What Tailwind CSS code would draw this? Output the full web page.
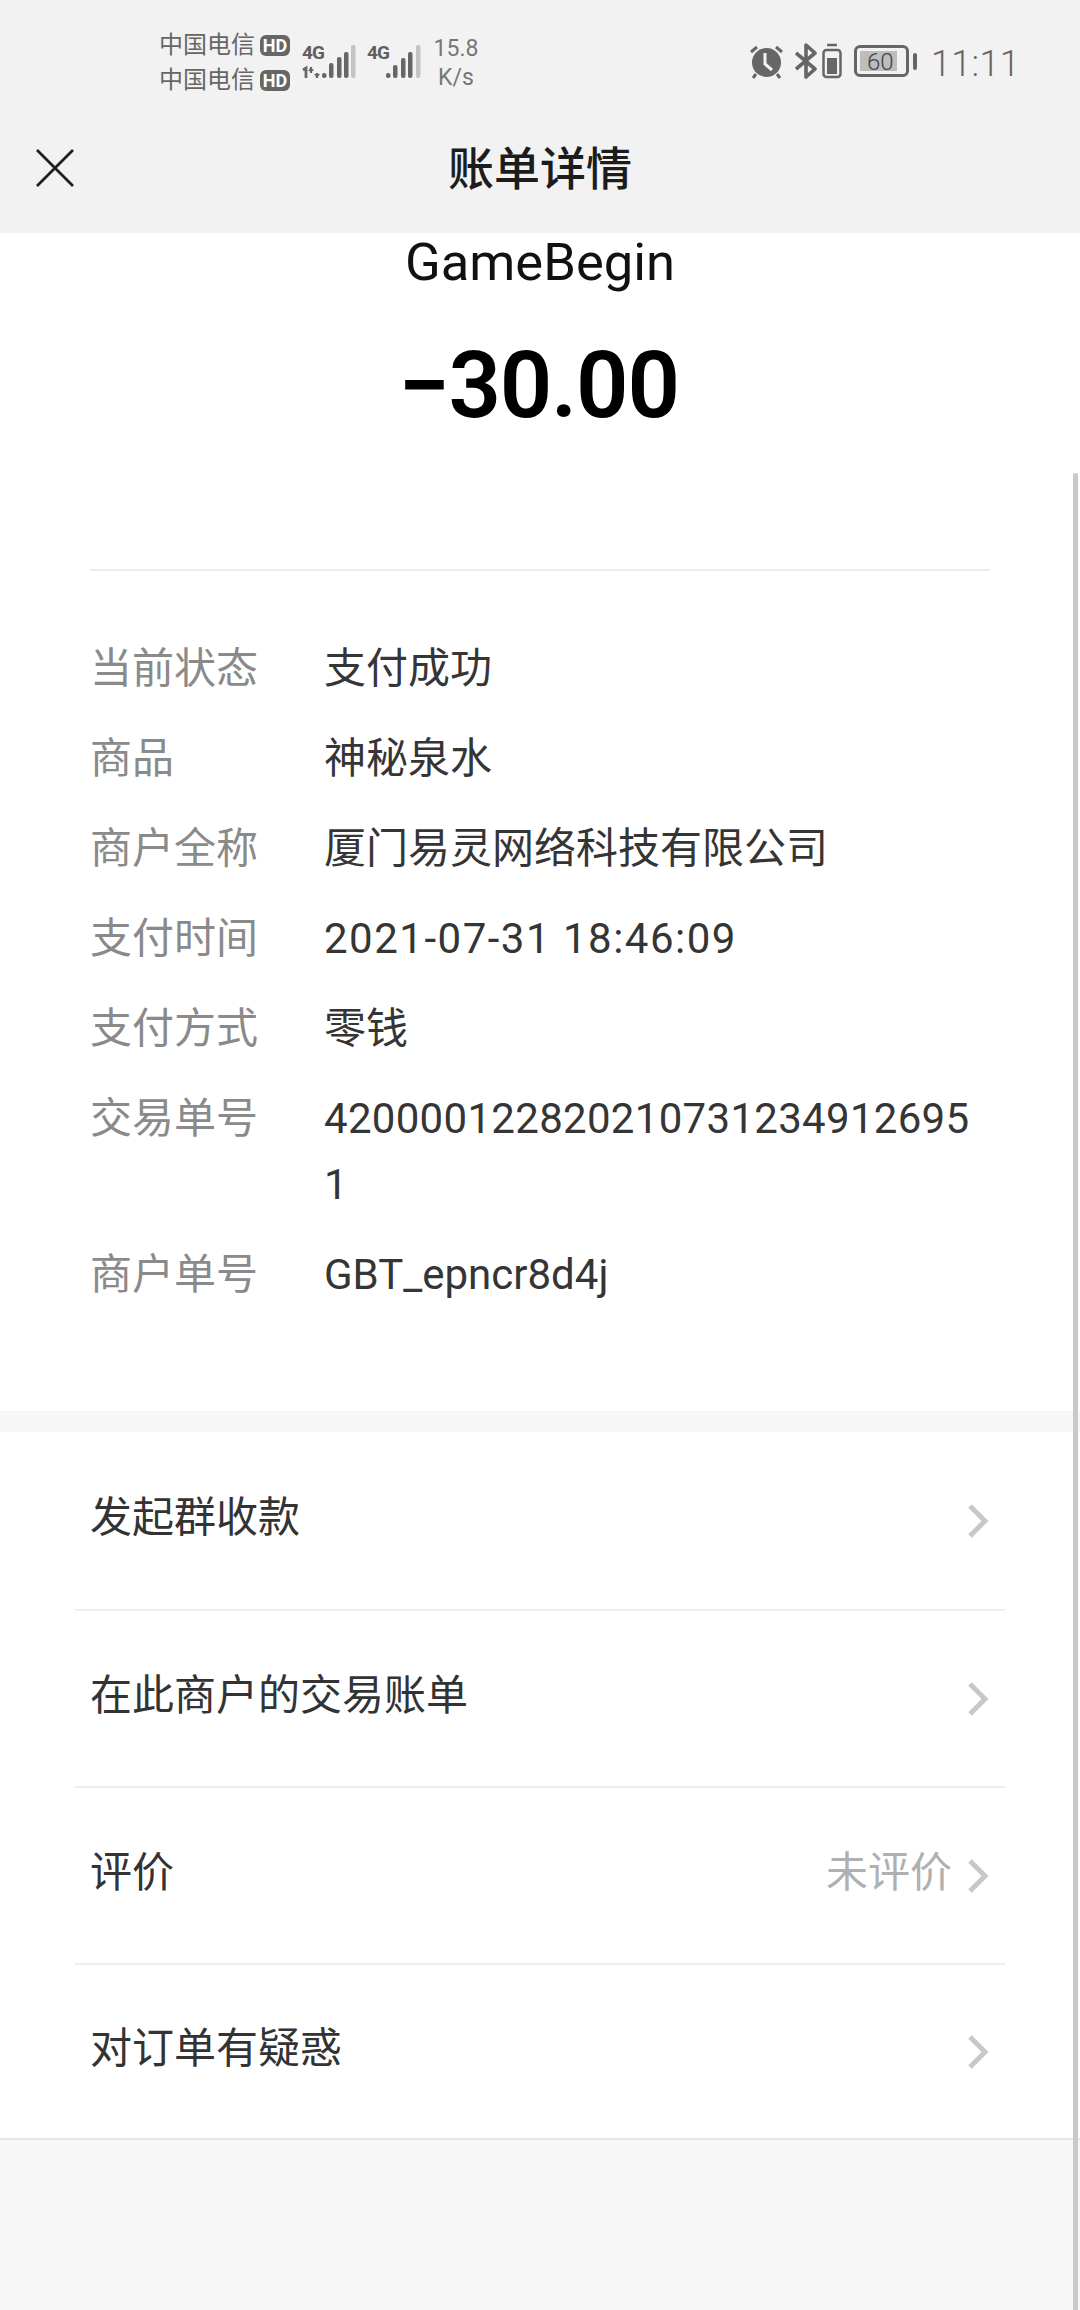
<!DOCTYPE html>
<html lang="zh">
<head>
<meta charset="utf-8">
<script src="https://cdn.jsdelivr.net/npm/@tailwindcss/browser@4"></script>
</head>
<body class="m-0">
<div class="relative w-[1080px] h-[2310px] overflow-hidden bg-[#f7f7f7] font-['Roboto','Noto_Sans_CJK_SC',sans-serif]">

  <!-- header -->
  <header class="h-[233px] bg-[#f2f2f2] flex flex-col">
    <div class="h-[130px] relative flex text-[#666666]">
      <div class="pl-[159px] pt-[32px] flex flex-col gap-[9px] w-[302px]">
        <div class="flex items-center gap-[7px] h-[26px]"><span class="text-[24px] leading-[26px] w-[94px] whitespace-nowrap">中国电信</span><span class="w-[30px] h-[21px] rounded-[6px] bg-[#666666] text-white text-[18px] leading-[21px] font-bold text-center">HD</span></div>
        <div class="flex items-center gap-[7px] h-[26px]"><span class="text-[24px] leading-[26px] w-[94px] whitespace-nowrap">中国电信</span><span class="w-[30px] h-[21px] rounded-[6px] bg-[#666666] text-white text-[18px] leading-[21px] font-bold text-center">HD</span></div>
      </div>
      <div class="w-[65px] relative">
        <span class="absolute left-0 top-[44px] text-[19px] leading-[18px] font-bold tracking-[-1px] text-[#5f5f5f]">4G</span>
        <svg class="absolute left-0 top-[44px]" width="54" height="36" viewBox="0 0 54 36" fill="none">
          <path d="M1 26l3-2v10" stroke="#666" stroke-width="2.800"/>
          <path d="M9 23v6M15 29v5" stroke="#666" stroke-width="2.200"/>
          <path d="M6 27h6l-3-4zM12 30h6l-3 4z" fill="#666"/>
          <rect x="20" y="29" width="4.500" height="5" rx="2" fill="#666"/><rect x="27" y="19" width="4.500" height="15" rx="2" fill="#666"/><rect x="35" y="13" width="4.500" height="21" rx="2" fill="#666"/><rect x="42" y="8" width="4.500" height="26" rx="2" fill="#666"/><rect x="49" y="1" width="4.500" height="33" rx="2" fill="#c4c4c4"/>
        </svg>
      </div>
      <div class="w-[65px] relative">
        <span class="absolute left-0 top-[44px] text-[19px] leading-[18px] font-bold tracking-[-1px] text-[#5f5f5f]">4G</span>
        <svg class="absolute left-[19px] top-[44px]" width="36" height="36" viewBox="0 0 36 36">
          <rect x="0" y="29" width="4.500" height="5" rx="2" fill="#666"/><rect x="7" y="21" width="4.500" height="13" rx="2" fill="#666"/><rect x="15" y="14" width="4.500" height="20" rx="2" fill="#666"/><rect x="22" y="8" width="4.500" height="26" rx="2" fill="#666"/><rect x="30" y="1" width="4.500" height="33" rx="2" fill="#c4c4c4"/>
        </svg>
      </div>
      <div class="absolute left-[430px] top-[35px] w-[52px] text-center text-[23px] leading-[28px] text-[#777777]"><div>15.8</div><div class="mt-[1px]">K/s</div></div>
      <div class="absolute left-[748px] top-[43px] flex items-start">
        <svg width="37" height="36" viewBox="0 0 37 36" fill="none">
          <circle cx="18.500" cy="19.500" r="14.500" fill="#666"/>
          <path d="M17 10v11l7 6" stroke="#f2f2f2" stroke-width="3"/>
          <path d="M3 9l6-5M34 9l-6-5M8 31l-3 4M29 31l3 4" stroke="#666" stroke-width="3"/>
        </svg>
        <svg class="ml-[10px]" width="23" height="36" viewBox="0 0 23 36" fill="none"><path d="M1 10l19 16-9 8V2l9 8L1 26" stroke="#666" stroke-width="3.600" stroke-linejoin="round"/></svg>
        <svg class="ml-[4px]" width="20" height="36" viewBox="0 0 20 36" fill="none"><path d="M5 2h10" stroke="#666" stroke-width="2.500"/><rect x="1.500" y="7" width="17" height="27" rx="3" stroke="#666" stroke-width="2.500"/><rect x="5" y="15" width="10" height="16" fill="#666"/></svg>
      </div>
      <div class="absolute left-[854px] top-[45px] w-[55px] h-[32px] rounded-[6px] border-[3px] border-[#666666] p-[3px]">
        <div class="h-full w-[37px] bg-[#bdbdbd]"></div>
        <span class="absolute left-[10px] top-[1px] text-[24px] leading-[26px] font-light text-[#444444]">60</span>
      </div>
      <div class="absolute left-[913px] top-[53px] w-[4px] h-[17px] rounded-[2px] bg-[#666666]"></div>
      <div class="absolute left-[931px] top-[42px] text-[36px] leading-[44px] font-light tracking-[0.300px] text-[#666666]">11:11</div>
    </div>
    <div class="relative flex-1 flex items-start justify-center">
      <svg class="absolute left-[36px] top-[19px]" width="38" height="38" viewBox="0 0 38 38" fill="none"><path d="M1 1l36 36M37 1L1 37" stroke="#1f1f1f" stroke-width="2.800"/></svg>
      <h1 class="mt-[9px] text-[46px] leading-[60px] font-medium text-[#1c1c1c]">账单详情</h1>
    </div>
  </header>

  <!-- summary and details -->
  <section class="bg-white h-[1178px]">
    <div class="text-center text-[52.500px] leading-[58px] text-[#111111]">GameBegin</div>
    <div class="mt-[45px] pr-[3px] text-center text-[92px] leading-[100px] font-semibold tracking-[-1.200px] text-black">−30.00</div>
    <div class="mx-[90px] mt-[133px] h-[2px] bg-[#ececec]"></div>
    <dl class="mt-[65px] mx-[90px] flex flex-col gap-[24px] text-[42px] leading-[66px]">
      <div class="flex"><dt class="w-[234px] shrink-0 text-[#8a8a8a]">当前状态</dt><dd class="text-[#353535]">支付成功</dd></div>
      <div class="flex"><dt class="w-[234px] shrink-0 text-[#8a8a8a]">商品</dt><dd class="text-[#353535]">神秘泉水</dd></div>
      <div class="flex"><dt class="w-[234px] shrink-0 text-[#8a8a8a]">商户全称</dt><dd class="text-[#353535]">厦门易灵网络科技有限公司</dd></div>
      <div class="flex"><dt class="w-[234px] shrink-0 text-[#8a8a8a]">支付时间</dt><dd class="text-[#353535] tracking-[1.500px]">2021-07-31 18:46:09</dd></div>
      <div class="flex"><dt class="w-[234px] shrink-0 text-[#8a8a8a]">支付方式</dt><dd class="text-[#353535]">零钱</dd></div>
      <div class="flex"><dt class="w-[234px] shrink-0 text-[#8a8a8a]">交易单号</dt><dd class="text-[#353535] flex-1 min-w-0 break-all tracking-[0.300px]">4200001228202107312349126951</dd></div>
      <div class="flex"><dt class="w-[234px] shrink-0 text-[#8a8a8a]">商户单号</dt><dd class="text-[#353535]">GBT_epncr8d4j</dd></div>
    </dl>
  </section>

  <div class="h-[21px] bg-[#f7f7f7]"></div>

  <!-- actions -->
  <section class="bg-white text-[42px] text-[#333333] border-b-2 border-[#e6e6e6]">
    <div class="mx-[75px] pl-[15px] pr-[15px] h-[179px] flex items-center border-b-2 border-[#eeeeee]"><span class="flex-1 -mt-[7px]">发起群收款</span><svg width="22" height="34" viewBox="0 0 22 34" fill="none"><path d="M2 2l15 15L2 32" stroke="#c8c8c8" stroke-width="5"/></svg></div>
    <div class="mx-[75px] pl-[15px] pr-[15px] h-[177px] flex items-center border-b-2 border-[#eeeeee]"><span class="flex-1 -mt-[7px]">在此商户的交易账单</span><svg width="22" height="34" viewBox="0 0 22 34" fill="none"><path d="M2 2l15 15L2 32" stroke="#c8c8c8" stroke-width="5"/></svg></div>
    <div class="mx-[75px] pl-[15px] pr-[15px] h-[177px] flex items-center border-b-2 border-[#eeeeee]"><span class="flex-1 -mt-[7px]">评价</span><span class="mr-[16px] -mt-[7px] text-[#b0b0b0]">未评价</span><svg width="22" height="34" viewBox="0 0 22 34" fill="none"><path d="M2 2l15 15L2 32" stroke="#c8c8c8" stroke-width="5"/></svg></div>
    <div class="mx-[75px] pl-[15px] pr-[15px] h-[173px] flex items-center"><span class="flex-1 -mt-[7px]">对订单有疑惑</span><svg width="22" height="34" viewBox="0 0 22 34" fill="none"><path d="M2 2l15 15L2 32" stroke="#c8c8c8" stroke-width="5"/></svg></div>
  </section>

  <!-- overlay scrollbar -->
  <div class="absolute left-[1073px] top-[473px] bottom-0 w-[5px] bg-[#c9c9c9] rounded-t-[2px]"></div>
</div>
</body>
</html>
